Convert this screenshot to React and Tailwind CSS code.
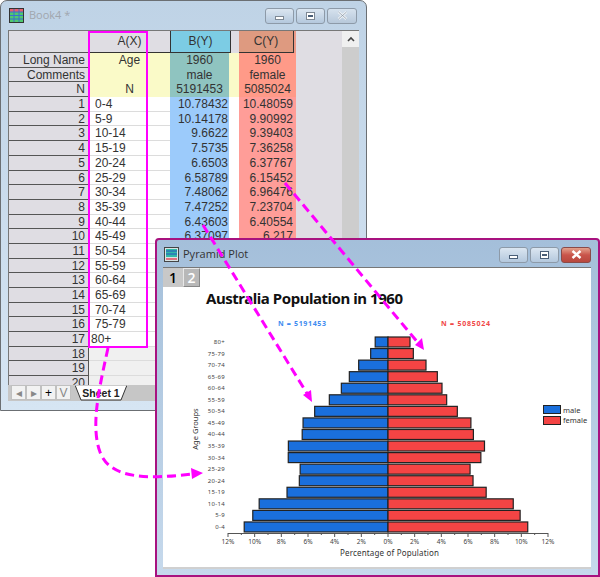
import React from "react";

const ages = ["0-4","5-9","10-14","15-19","20-24","25-29","30-34","35-39","40-44","45-49","50-54","55-59","60-64","65-69","70-74","75-79","80+"];
const males = ["10.78432","10.14178","9.6622","7.5735","6.6503","6.58789","7.48062","7.47252","6.43603","6.37097","5.5","4.4","3.5","2.9","2.2","1.3","0.96"];
const females = ["10.48059","9.90992","9.39403","7.36258","6.37767","6.15452","6.96476","7.23704","6.40554","6.217","5.2","4.4","4.05","3.7","2.85","1.9","1.65"];

const BookIcon = () => (
  <svg width="15" height="15" viewBox="0 0 15 15" className="shrink-0">
    <rect x="0.5" y="0.5" width="14" height="14" fill="#4fc96f" stroke="#333" />
    <rect x="1" y="1" width="13" height="3" fill="#e8606a" />
    <path d="M5 1v13M10 1v13M1 4h13M1 7.5h13M1 11h13" stroke="#3b6fd0" strokeWidth="1" />
  </svg>
);

const PlotIcon = () => (
  <svg width="15" height="15" viewBox="0 0 15 15" className="shrink-0">
    <rect x="0.5" y="0.5" width="14" height="14" fill="#d8e4e4" stroke="#444" />
    <rect x="2" y="2" width="11" height="8" fill="#2fb8a8" />
    <path d="M2 4h11M2 7h11" stroke="#2a50c0" />
    <path d="M2 12h11" stroke="#e04a60" strokeWidth="1.5" />
  </svg>
);

function WinButton({ kind, active }) {
  const glyph = active ? "#4a5f78" : "#7d8894";
  if (kind === "close") {
    return (
      <div className={`flex h-[16px] w-[30px] items-center justify-center rounded-[3px] border ${active ? "border-[#8a4a48] bg-gradient-to-b from-[#e2a08c] via-[#c9544a] to-[#b8483e]" : "border-[#8d9aa8] bg-gradient-to-b from-[#d6e2ee] to-[#b7c8da]"}`}>
        <svg width="11" height="9" viewBox="0 0 11 9">
          <path d="M1.5 1l8 7M9.5 1l-8 7" stroke={active ? "#fff" : "#eef2f6"} strokeWidth="2.4" />
          {!active && <path d="M1.5 1l8 7M9.5 1l-8 7" stroke="#8793a0" strokeWidth="0.7" />}
        </svg>
      </div>
    );
  }
  return (
    <div className="flex h-[16px] w-[29px] items-center justify-center rounded-[3px] border border-[#8d9aa8] bg-gradient-to-b from-[#dbe6f1] to-[#b4c8dd]">
      {kind === "min" ? (
        <div className="mt-[4px] h-[4px] w-[9px] border border-solid bg-white" style={{ borderColor: glyph }} />
      ) : (
        <div className="flex h-[8px] w-[9px] items-center justify-center border border-solid bg-white" style={{ borderColor: glyph }}>
          <div className="h-[2px] w-[5px] bg-[#4a5f78]" />
        </div>
      )}
    </div>
  );
}

function MetaRow({ label, a, b, c }) {
  return (
    <div className="flex h-[14.7px] text-[12px] leading-[14px] text-[#333]">
      <div className="w-[80px] border-b border-r border-[#555] bg-[#dfdde3] pr-[3px] text-right">{label}</div>
      <div className="w-[81px] bg-[#fafac8] text-center">{a}</div>
      <div className="w-[59px] bg-[#8fc4c0] text-center">{b}</div>
      <div className="w-[10px] bg-[#fafac8]" />
      <div className="w-[57px] bg-[#ff9a88] text-center">{c}</div>
    </div>
  );
}

function BookWindow() {
  const rows = Array.from({ length: 20 }, (_, i) => i);
  return (
    <div className="absolute left-0 top-0 h-[411px] w-[367px] rounded-t-[7px] border border-[#6b6f73] bg-gradient-to-b from-[#bfd3e6] to-[#d6e5f3]">
      {/* title bar */}
      <div className="flex h-[29px] items-center pl-[8px] pr-[9px]">
        <BookIcon />
        <span className="ml-[5px] font-['Open_Sans',sans-serif] text-[11px] text-[#a0a6ad]">Book4 *</span>
        <div className="ml-auto flex gap-[2px]">
          <WinButton kind="min" />
          <WinButton kind="max" />
          <WinButton kind="close" />
        </div>
      </div>

      {/* worksheet */}
      <div className="ml-[7px] flex h-[355px] w-[351px] overflow-hidden border-l border-t border-[#777] bg-[#dfdde3] font-['Liberation_Sans',sans-serif]">
        <div className="w-[287px] shrink-0">
          <div className="flex h-[22px] text-center text-[12px] leading-[20px] text-[#333]">
            <div className="w-[80px] border-b border-r border-[#555] bg-[#dfdde3]" />
            <div className="w-[81px] border-b border-[#333] bg-[#dfdde3]">A(X)</div>
            <div className="w-[61px] border-x border-b border-[#333] bg-[#7ccce4]">B(Y)</div>
            <div className="w-[8px] bg-[#dfdde3]" />
            <div className="w-[55px] border-b border-r border-[#333] bg-[#de9a80]">C(Y)</div>
            <div className="w-[2px] bg-[#ec9a88]" />
          </div>
          <MetaRow label="Long Name" a="Age" b="1960" c="1960" />
          <MetaRow label="Comments" a="" b="male" c="female" />
          <MetaRow label="N" a="N" b="5191453" c="5085024" />
          {rows.map((i) => (
            <div key={i} className="flex h-[14.7px] text-[12px] leading-[14px] text-[#333]">
              <div className="w-[80px] border-b border-r border-[#555] bg-[#dfdde3] pr-[3px] text-right">{i + 1}</div>
              <div className={`w-[81px] border-b border-[#dcdcdc] ${i < 16 ? "bg-white pl-[6px]" : i === 16 ? "bg-white pl-[2px]" : "bg-[#f0f0f0]"}`}>{ages[i]}</div>
              <div className={`w-[59px] pr-[1px] text-right ${i < 17 ? "bg-[#9ccbfb]" : "bg-[#f0f0f0]"}`}>{i < 10 ? males[i] : ""}</div>
              <div className={`w-[10px] ${i < 17 ? "bg-white" : "bg-[#f0f0f0]"}`} />
              <div className={`w-[57px] pr-[3px] text-right ${i < 17 ? "bg-[#ff9d98]" : "bg-[#f0f0f0]"}`}>{i < 10 ? females[i] : ""}</div>
            </div>
          ))}
        </div>
        <div className="flex-1" />
        <div className="flex w-[17px] shrink-0 flex-col bg-[#f0f0f0]">
          <div className="flex h-[16px] items-center justify-center">
            <svg width="8" height="6" viewBox="0 0 8 6"><path d="M1 5l3-3 3 3" fill="none" stroke="#444" strokeWidth="1.6" /></svg>
          </div>
          <div className="h-[200px] bg-[#cdcdcd]" />
        </div>
      </div>

      {/* sheet tabs */}
      <div className="ml-[7px] flex h-[16px] w-[351px] items-stretch bg-[#c6c6c6] font-['Liberation_Sans',sans-serif]">
        <div className="ml-[3px] flex">
          {["◂", "▸", "+", "V"].map((g) => (
            <div key={g} className={`flex h-[15px] w-[15px] items-center justify-center border border-[#c0c0c0] bg-[#f2f2f2] text-[12px] leading-none ${g === "+" ? "text-black" : "text-[#888]"}`}>{g}</div>
          ))}
        </div>
        <div className="relative ml-[3px] flex w-[54px] items-center justify-center">
          <svg className="absolute left-0 top-0" width="54" height="16" viewBox="0 0 54 16">
            <path d="M1 0l6 15h40l6-15z" fill="#fff" stroke="#333" />
            <path d="M0 0h54" stroke="#fff" />
          </svg>
          <span className="relative text-[10.5px] font-bold leading-none text-[#222]">Sheet 1</span>
        </div>
      </div>
    </div>
  );
}

function PyramidChart() {
  const pct = 160 / 12;
  const cx = 388;
  const top = 337;
  const step = 11.56;
  const ticks = [];
  for (let i = -12; i <= 12; i++) ticks.push(i);
  return (
    <svg viewBox="163 268 428 297" width="428" height="297" className="block font-['Noto_Sans',sans-serif]">
      <text x="206" y="304" fontSize="15" fontWeight="700" fill="#111" textLength="197">Australia Population in 1960</text>
      <text x="278" y="326" fontSize="7" fontWeight="700" fill="#3f8cf0" textLength="48">N = 5191453</text>
      <text x="441" y="326" fontSize="7" fontWeight="700" fill="#f04848" textLength="49">N = 5085024</text>

      {ages.map((age, i) => {
        const row = 16 - i;
        const y = top + row * step;
        const m = parseFloat(males[i]) * pct;
        const f = parseFloat(females[i]) * pct;
        return (
          <g key={age}>
            <rect x={cx - m} y={y} width={m} height={10} fill="#1a6fdc" stroke="#222" strokeWidth="1.2" />
            <rect x={cx} y={y} width={f} height={10} fill="#f44444" stroke="#222" strokeWidth="1.2" />
            <text x="225" y={y + 7} fontSize="6" fill="#444" textAnchor="end" letterSpacing="0.3">{age}</text>
          </g>
        );
      })}

      <path d="M228 533.5H548" stroke="#555" />
      {ticks.map((t) => (
        <path key={t} d={`M${cx + t * pct} 533V${t % 2 === 0 ? 537 : 535}`} stroke="#555" />
      ))}
      {[12, 10, 8, 6, 4, 2, 0].map((t) => (
        <text key={`l${t}`} x={cx - t * pct} y="544" fontSize="6.5" fill="#444" textAnchor="middle">{t}%</text>
      ))}
      {[2, 4, 6, 8, 10, 12].map((t) => (
        <text key={`r${t}`} x={cx + t * pct} y="544" fontSize="6.5" fill="#444" textAnchor="middle">{t}%</text>
      ))}
      <text x="340" y="556" fontSize="8" fill="#333" textLength="99">Percentage of Population</text>
      <text x="0" y="0" fontSize="7.5" fill="#333" textAnchor="middle" transform="translate(198 429) rotate(-90)">Age Groups</text>

      <rect x="543.5" y="405.5" width="17" height="8" fill="#1a6fdc" stroke="#222" />
      <rect x="543.5" y="416.5" width="17" height="8" fill="#f44444" stroke="#222" />
      <text x="563" y="413" fontSize="7.5" fill="#333">male</text>
      <text x="563" y="423" fontSize="7.5" fill="#333">female</text>
    </svg>
  );
}

function PlotWindow() {
  return (
    <div className="absolute left-[155px] top-[238px] h-[339px] w-[445px] rounded-t-[4px] border-2 border-[#a8127f] bg-gradient-to-b from-[#a4bfda] to-[#c6d9ec]">
      <div className="flex h-[27px] items-center pl-[7px] pr-[7px] pt-[2px]">
        <PlotIcon />
        <span className="ml-[4px] font-['Open_Sans',sans-serif] text-[11px] text-[#333]">Pyramid Plot</span>
        <div className="ml-auto flex gap-[2px]">
          <WinButton kind="min" active />
          <WinButton kind="max" active />
          <WinButton kind="close" active />
        </div>
      </div>
      <div className="relative mx-[6px] h-[302px] w-[428px] border-b-2 border-t border-b-[#d0d0d0] border-t-[#777] bg-white">
        <div className="absolute left-0 top-0 flex font-['Open_Sans',sans-serif] text-[14px] font-semibold leading-[18px]">
          <div className="flex h-[19px] w-[20px] items-center justify-center bg-[#c8c8c8] text-black">1</div>
          <div className="flex h-[19px] w-[17px] items-center justify-center border border-[#e8e8e8] border-b-[#888] border-r-[#888] bg-[#b8b8b8] text-white">2</div>
        </div>
        <PyramidChart />
      </div>
    </div>
  );
}

function Annotations() {
  return (
    <svg className="pointer-events-none absolute left-0 top-0" width="600" height="577" viewBox="0 0 600 577">
      <g fill="none" stroke="#ff00ff" strokeWidth="3" strokeDasharray="9 5">
        <path d="M203 225L308 395" />
        <path d="M285 183L419 344" />
        <path d="M108 348C100 385 90 425 100 452C110 480 150 479 192 474" />
      </g>
      <path d="M312 402L303 395L311 390z" fill="#ff00ff" />
      <path d="M424 350L415 345L422 338z" fill="#ff00ff" />
      <path d="M203 473L191 468L192 479z" fill="#ff00ff" />
      <rect x="89" y="32" width="58" height="315" fill="none" stroke="#ff00ff" strokeWidth="2" />
    </svg>
  );
}

export default function App() {
  return (
    <div className="relative h-[577px] w-[600px] overflow-hidden bg-white">
      <BookWindow />
      <PlotWindow />
      <Annotations />
    </div>
  );
}
